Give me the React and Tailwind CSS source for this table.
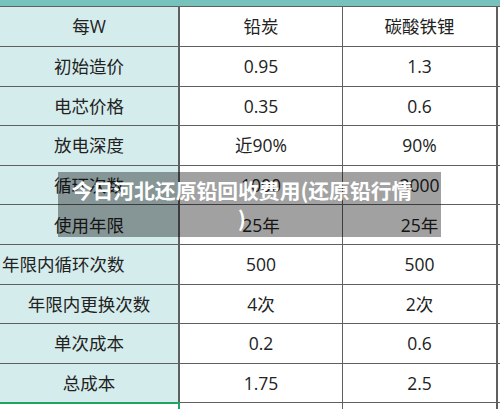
import React from "react";

const rows = [
  ["每W", "铅炭", "碳酸铁锂"],
  ["初始造价", "0.95", "1.3"],
  ["电芯价格", "0.35", "0.6"],
  ["放电深度", "近90%", "90%"],
  ["循环次数", "1000", "3000"],
  ["使用年限", "25年", "25年"],
  ["年限内循环次数", "500", "500"],
  ["年限内更换次数", "4次", "2次"],
  ["单次成本", "0.2", "0.6"],
  ["总成本", "1.75", "2.5"],
];

function Row({ cells, index }) {
  const first = index === 0;
  return (
    <div
      className={`grid grid-cols-[180px_163px_155px_2px] border-b border-[#5f5f5f] ${
        first ? "h-[40px]" : "h-[39.6px]"
      }`}
    >
      <div
        className={`flex items-center bg-[#d5ecec] border-r-2 border-[#5f5f5f] ${
          cells[0] === "年限内循环次数" ? "justify-start pl-[2px]" : "justify-center"
        }`}
      >
        {cells[0]}
      </div>
      <div className="flex items-center justify-center border-r border-[#5f5f5f]">
        {cells[1]}
      </div>
      <div className="flex items-center justify-center border-r-2 border-[#5f5f5f]">
        {cells[2]}
      </div>
      <div />
    </div>
  );
}

export default function App() {
  return (
    <div
      className="relative w-[500px] h-[409px] overflow-hidden bg-white text-[#222] text-[17.5px]"
      style={{ fontFamily: '"Open Sans", "Noto Sans CJK SC", sans-serif' }}
    >
      <div className="h-[6px] bg-[#76c3bd]" />
      <div className="border-t border-[#5f5f5f]">
        {rows.map((r, i) => (
          <Row key={i} cells={r} index={i} />
        ))}
        <div className="grid grid-cols-[180px_163px_155px_2px] h-[10px]">
          <div className="border-t-2 border-r-2 border-[#21a366] -mt-[1px]" />
          <div className="border-r border-[#5f5f5f]" />
          <div className="border-r-2 border-[#5f5f5f]" />
          <div />
        </div>
      </div>

      {/* caption over the picture */}
      <div className="absolute left-[58px] top-[172px] w-[383px] h-[65px] bg-[rgba(0,0,0,0.37)] pl-[9px] pt-[4px]">
        <p
          className="w-[350px] text-white font-bold text-[20.8px] leading-[28px] text-center"
          style={{ fontFamily: '"Noto Sans CJK SC", "Noto Sans", sans-serif' }}
        >
          <span className="whitespace-nowrap">今日河北还原铅回收费用(还原铅行情</span>
          <br />
          )
        </p>
      </div>
    </div>
  );
}
